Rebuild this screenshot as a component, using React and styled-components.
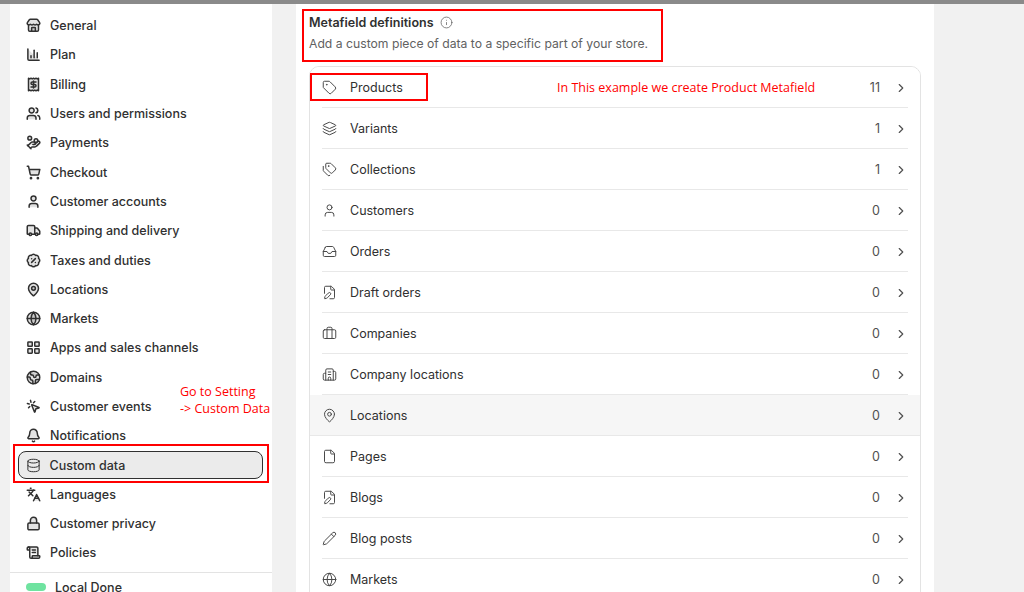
import React from "react";
import styled, { createGlobalStyle } from "styled-components";
import {
  Store, BarChart3, Receipt, Users, HandCoins, ShoppingCart, User, Truck, BadgePercent, MapPin,
  Globe, LayoutGrid, Globe2, MousePointerClick, Bell, Database, Languages, Lock, ScrollText,
  Tag, Layers, Tags, Inbox, FilePen, Briefcase, Building2, File, FileEdit, Pencil, ChevronRight, Info,
} from "lucide-react";

const Global = createGlobalStyle`
  html, body { margin: 0; background: #f1f1f1; }
  body { font-family: Inter, "Noto Sans", sans-serif; color: #303030; }
`;

const Page = styled.div`
  width: 1024px; height: 592px; overflow: hidden;
  border-top: 4px solid #8a8a8a; box-sizing: border-box;
  display: flex; align-items: flex-start; background: #f1f1f1;
`;
const Sidebar = styled.nav`
  width: 262px; margin-left: 10px; background: #fff; height: 600px;
  padding: 7px 8px 0; box-sizing: border-box; position: relative;
`;
const NavItem = styled.div`
  height: 29.3px; box-sizing: border-box; display: flex; align-items: center; gap: 9px;
  padding-left: 8px;
  font-size: 12.5px; font-weight: 500; color: #303030;
  ${p => p.$active && `
    background: #ebebeb; border: 1.5px solid #303030; border-radius: 8px;
    height: 28px; margin: 0.65px 1px 0.65px 0; padding-left: 6.5px;
  `}
  svg { flex: none; }
`;
const RedBox = styled.div`
  position: absolute; border: 2.5px solid #f00; box-sizing: border-box;
`;
const Note = styled.div`
  position: absolute; color: #f00; font-family: "Open Sans", sans-serif; font-size: 12.5px; line-height: 17px;
  white-space: nowrap;
`;
const Divider = styled.div`
  border-top: 1px solid #e3e3e3; margin: 4px -8px 0;
`;
const Badge = styled.span`
  display: inline-block; width: 20px; height: 8px; background: #6fe3a0; border-radius: 4px;
`;
const Main = styled.main`
  width: 638px; margin-left: 24px; background: #fff; height: 600px;
  padding: 7px 13px 0; box-sizing: border-box; position: relative;
`;
const Header = styled.div`
  padding: 4px 0 0; height: 55px; box-sizing: border-box;
`;
const Title = styled.div`
  font-size: 12.5px; font-weight: 600; display: flex; align-items: center; gap: 6px; color: #303030;
`;
const Sub = styled.div`
  font-size: 12.2px; color: #616161; margin-top: 6px;
`;
const Card = styled.div`
  border: 1px solid #e3e3e3; border-radius: 10px; overflow: hidden;
`;
const Row = styled.div`
  height: 41px; display: flex; align-items: center; padding: 0 12px; position: relative;
  background: ${p => p.$hover ? "#f6f6f6" : "#fff"};
  font-size: 12.5px; color: #303030;
  &::after {
    content: ""; position: absolute; left: 12px; right: 12px; bottom: 0;
    border-bottom: 1px solid #e8e8e8;
  }
  ${p => p.$hover && `&::after{left:0;right:0;}`}
`;
const Label = styled.span`
  margin-left: 13px; flex: 1;
`;
const Count = styled.span`
  color: #505050; margin-right: 14px;
`;

const nav = [
  [Store, "General"], [BarChart3, "Plan"], [Receipt, "Billing"], [Users, "Users and permissions"],
  [HandCoins, "Payments"], [ShoppingCart, "Checkout"], [User, "Customer accounts"],
  [Truck, "Shipping and delivery"], [BadgePercent, "Taxes and duties"], [MapPin, "Locations"],
  [Globe, "Markets"], [LayoutGrid, "Apps and sales channels"], [Globe2, "Domains"],
  [MousePointerClick, "Customer events"], [Bell, "Notifications"], [Database, "Custom data", true],
  [Languages, "Languages"], [Lock, "Customer privacy"], [ScrollText, "Policies"],
];
const rows = [
  [Tag, "Products", 11], [Layers, "Variants", 1], [Tags, "Collections", 1], [User, "Customers", 0],
  [Inbox, "Orders", 0], [FilePen, "Draft orders", 0], [Briefcase, "Companies", 0],
  [Building2, "Company locations", 0], [MapPin, "Locations", 0, true], [File, "Pages", 0],
  [FileEdit, "Blogs", 0], [Pencil, "Blog posts", 0], [Globe, "Markets", 0],
];

export default function App() {
  return (
    <Page>
      <Global />
      <Sidebar>
        {nav.map(([I, t, a]) => (
          <NavItem key={t} $active={a}>
            <I size={15} strokeWidth={a ? 1.6 : 2.4} color="#303030" fill={a ? "none" : "#30303022"} />
            {t}
          </NavItem>
        ))}
        <Divider />
        <NavItem><Badge /> Local Done</NavItem>
        <RedBox style={{ left: 3, top: 440, width: 256, height: 39 }} />
        <Note style={{ left: 170, top: 379 }}>Go to Setting<br />-&gt; Custom Data</Note>
      </Sidebar>
      <Main>
        <Header>
          <Title>Metafield definitions <Info size={13} strokeWidth={1.4} color="#616161" /></Title>
          <Sub>Add a custom piece of data to a specific part of your store.</Sub>
        </Header>
        <Card>
          {rows.map(([I, t, c, h]) => (
            <Row key={t} $hover={h}>
              <I size={15} strokeWidth={1.6} color="#4a4a4a" />
              <Label>{t}</Label>
              <Count>{c}</Count>
              <ChevronRight size={14} strokeWidth={2} color="#505050" />
            </Row>
          ))}
        </Card>
        <RedBox style={{ left: 6, top: 5, width: 361, height: 53 }} />
        <RedBox style={{ left: 14, top: 69, width: 118, height: 28 }} />
        <Note style={{ left: 261, top: 75 }}>In This example we create Product Metafield</Note>
      </Main>
    </Page>
  );
}
